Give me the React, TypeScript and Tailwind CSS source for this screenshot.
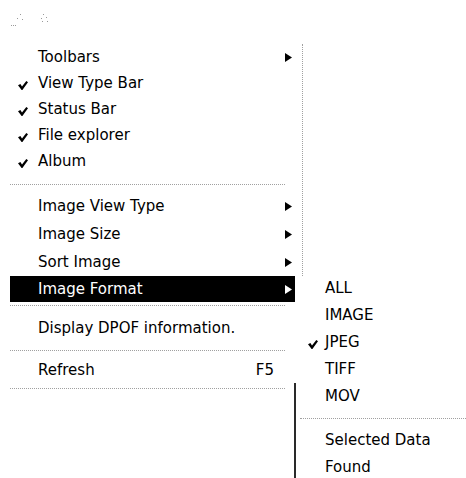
import { FC } from 'react';

const Check: FC<{ className?: string }> = ({ className }) => (
    <svg width="10" height="9" viewBox="0 0 10 9" className={className}>
        <polygon points="0,4.2 2.4,3.1 4,5.5 8.3,0 10,1.3 4.4,9 3.6,9" fill="currentColor" />
    </svg>
);

const Arrow: FC<{ className?: string }> = ({ className }) => (
    <svg width="7" height="9" viewBox="0 0 7 9" className={className}>
        <polygon points="0,0 7,4.5 0,9" fill="currentColor" />
    </svg>
);

interface RowProps {
    label: string;
    checked?: boolean;
    arrow?: boolean;
    shortcut?: string;
    height: string;
    active?: boolean;
}

const MenuRow: FC<RowProps> = ({ label, checked, arrow, shortcut, height, active }) => (
    <div className={`flex items-center ${height} ${active ? 'bg-black text-white' : 'text-black'}`}>
        <div className="w-[28px] shrink-0 pl-[8px] flex items-center">
            {checked && <Check className="translate-y-[2px]" />}
        </div>
        <span className="flex-1 whitespace-nowrap">{label}</span>
        {shortcut && <span className="pr-[21px]">{shortcut}</span>}
        {arrow && <Arrow className="mr-[3px]" />}
    </div>
);

const Separator: FC<{ className: string }> = ({ className }) => (
    <div className={className}>
        <div className="border-t border-dotted border-[#a0a0a0]" />
    </div>
);

const SubRow: FC<{ label: string; checked?: boolean }> = ({ label, checked }) => (
    <div className="flex items-center h-[27px]">
        <div className="w-[29px] shrink-0 pl-[12px] flex items-center">
            {checked && <Check className="translate-y-[2px]" />}
        </div>
        <span className="whitespace-nowrap">{label}</span>
    </div>
);

export default function App() {
    return (
        <div className="relative w-[466px] h-[478px] overflow-hidden bg-white text-black text-[15px] leading-none font-['DejaVu_Sans',sans-serif]">
            <div className="h-[44px]">
                <svg width="60" height="30" viewBox="0 0 60 30" className="block">
                    <g fill="#9a9a9a">
                        <rect x="20" y="14" width="1" height="1" />
                        <rect x="17" y="18" width="1" height="1" />
                        <rect x="22" y="19" width="1" height="1" />
                        <rect x="11" y="25" width="1" height="1" />
                        <rect x="13" y="25" width="1" height="1" />
                        <rect x="15" y="25" width="1" height="1" />
                        <rect x="43" y="14" width="1" height="1" />
                        <rect x="41" y="18" width="1" height="1" />
                        <rect x="46" y="17" width="1" height="1" />
                        <rect x="42" y="21" width="1" height="1" />
                        <rect x="47" y="21" width="1" height="1" />
                    </g>
                </svg>
            </div>

            <div className="ml-[10px] w-[293px]">
                <div className="pr-[7px] border-r border-dotted border-[#a0a0a0]">
                    <MenuRow label="Toolbars" arrow height="h-[26px]" />
                    <MenuRow label="View Type Bar" checked height="h-[26px]" />
                    <MenuRow label="Status Bar" checked height="h-[26px]" />
                    <MenuRow label="File explorer" checked height="h-[26px]" />
                    <MenuRow label="Album" checked height="h-[26px]" />
                    <Separator className="pt-[10px] pb-[7px] mr-[10px]" />
                    <MenuRow label="Image View Type" arrow height="h-[28px]" />
                    <MenuRow label="Image Size" arrow height="h-[28px]" />
                    <MenuRow label="Sort Image" arrow height="h-[28px]" />
                </div>
                <div className="pr-[8px]">
                    <MenuRow label="Image Format" arrow active height="h-[26px]" />
                    <Separator className="pt-[3px] pb-[9px] mr-[10px]" />
                    <MenuRow label="Display DPOF information." height="h-[27px]" />
                    <Separator className="pt-[8px] pb-[6px] mr-[10px]" />
                    <MenuRow label="Refresh" shortcut="F5" height="h-[27px]" />
                    <Separator className="pt-[4px] mr-[10px]" />
                </div>
            </div>

            <div className="absolute left-[294px] top-[275px] w-[172px]">
                <div className="border-l-2 border-transparent">
                    <SubRow label="ALL" />
                    <SubRow label="IMAGE" />
                    <SubRow label="JPEG" checked />
                    <SubRow label="TIFF" />
                    <div className="h-[6px]" />
                </div>
                <div className="border-l-2 border-[#2a2a2a] h-[197px] -mt-[6px] pt-[0px]">
                    <SubRow label="MOV" />
                    <Separator className="pt-[8px] pb-[8px] ml-[4px]" />
                    <SubRow label="Selected Data" />
                    <SubRow label="Found" />
                </div>
            </div>
        </div>
    );
}
